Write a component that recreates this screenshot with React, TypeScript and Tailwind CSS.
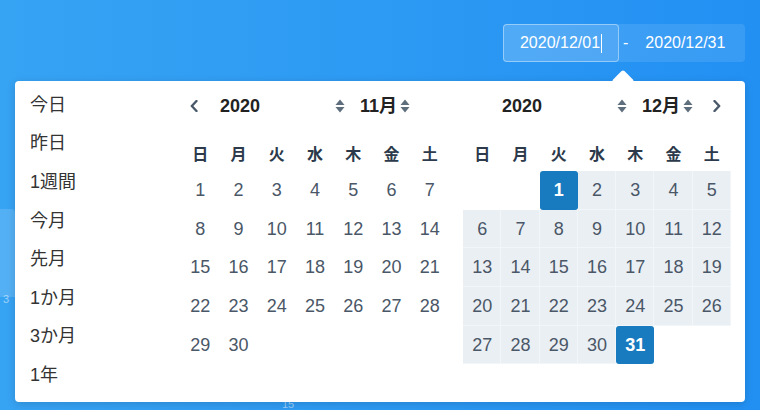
import React from "react";

const FONT = { fontFamily: '"Liberation Sans", "Noto Sans CJK JP", sans-serif' };

function Spinner() {
  return (
    <svg width="10" height="16" viewBox="0 0 10 16" className="shrink-0">
      <path d="M0.5 7 L5 1.5 L9.5 7 Z" fill="#5f6e7d" />
      <path d="M0.5 9 L5 14.5 L9.5 9 Z" fill="#5f6e7d" />
    </svg>
  );
}

function Chevron({ dir }: { dir: "left" | "right" }) {
  return (
    <svg width="8" height="12" viewBox="0 0 8 12" className="shrink-0">
      <path
        d={dir === "left" ? "M6.5 1 L1.8 6 L6.5 11" : "M1.5 1 L6.2 6 L1.5 11"}
        fill="none"
        stroke="#4a5969"
        strokeWidth="2.4"
        strokeLinecap="round"
        strokeLinejoin="round"
      />
    </svg>
  );
}

const WEEK = ["日", "月", "火", "水", "木", "金", "土"];

type Cell = { d: number | null; state: "none" | "range" | "sel" };

function Calendar({
  month,
  offset,
  days,
  prev,
  next,
  range,
}: {
  month: string;
  offset: number;
  days: number;
  prev?: boolean;
  next?: boolean;
  range?: boolean;
}) {
  const cells: Cell[] = [];
  for (let i = 0; i < offset; i++) cells.push({ d: null, state: "none" });
  for (let d = 1; d <= days; d++) {
    let state: Cell["state"] = "none";
    if (range) state = d === 1 || d === days ? "sel" : "range";
    cells.push({ d, state });
  }
  return (
    <div className="w-[268px] pt-[6px]">
      <div className="flex h-[38px] items-center">
        <div className="flex w-[39px] items-center pl-[9px]">{prev && <Chevron dir="left" />}</div>
        <span className="w-[115px] text-[18px] font-bold text-[#222]">2020</span>
        <Spinner />
        <span className="ml-[15px] text-[18px] font-bold text-[#222]">{month}</span>
        <span className="ml-[3px]">
          <Spinner />
        </span>
        {next && (
          <span className="ml-auto mr-[10px] flex">
            <Chevron dir="right" />
          </span>
        )}
      </div>
      <div className="mt-[14px] grid h-[32px] grid-cols-7 items-center">
        {WEEK.map((w) => (
          <div key={w} className="text-center text-[16px] font-bold text-[#2c3a4b]">
            {w}
          </div>
        ))}
      </div>
      <div className="grid grid-cols-7">
        {cells.map((c, i) => (
          <div
            key={i}
            className={
              "flex h-[38.7px] items-center justify-center text-[18px] " +
              (c.state === "sel"
                ? "rounded-[3px] bg-[#197bbf] font-bold text-white"
                : c.state === "range"
                ? "bg-[#eaeff4] text-[#4a5767] shadow-[inset_-1px_-1px_0_#f3f6f9]"
                : "text-[#4a5767]")
            }
          >
            {c.d ?? ""}
          </div>
        ))}
      </div>
    </div>
  );
}

const PRESETS = ["今日", "昨日", "1週間", "今月", "先月", "1か月", "3か月", "1年"];

export default function App() {
  return (
    <div
      className="relative h-[410px] w-[760px] overflow-hidden bg-linear-to-r from-[#37a3f3] to-[#2290f3]"
      style={FONT}
    >
      {/* faint chart behind */}
      <div className="absolute left-0 top-[209px] h-[88px] w-[15px] rounded-tr-[4px] bg-white/15" />
      <div className="absolute left-[3px] top-[291px] text-[11px] text-white/50">3</div>
      <div className="absolute left-[282px] top-[398px] text-[11px] leading-[12px] text-white/50">15</div>

      <div className="flex justify-end pr-[15px] pt-[24px]">
        <div className="flex h-[38px] w-[242px] items-center rounded-[4px] bg-white/10">
          <div className="flex h-full w-[116px] items-center justify-center rounded-[4px] border border-white/40 bg-white/10 text-[16px] text-white">
            <span>2020/12/01</span>
            <span className="ml-[1px] h-[19px] w-[1px] bg-white" />
          </div>
          <span className="px-[4px] text-[16px] text-white">-</span>
          <span className="ml-[13px] text-[16px] text-white">2020/12/31</span>
        </div>
      </div>

      <div className="absolute left-[15px] top-[81px] h-[321px] w-[730px] rounded-[4px] bg-white shadow-[0_2px_8px_rgba(0,0,0,0.15)]">
        <div className="absolute left-[600px] top-[-8px] h-[16px] w-[16px] rotate-45 rounded-[2px] bg-white" />
        <div className="relative flex h-full">
          <div className="w-[166px] pl-[15px] pt-[5px]">
            {PRESETS.map((p) => (
              <div key={p} className="flex h-[38.6px] items-center text-[18px] text-[#333]">
                {p}
              </div>
            ))}
          </div>
          <Calendar month="11月" offset={0} days={30} prev />
          <div className="w-[14px]" />
          <Calendar month="12月" offset={2} days={31} next range />
        </div>
      </div>
    </div>
  );
}
